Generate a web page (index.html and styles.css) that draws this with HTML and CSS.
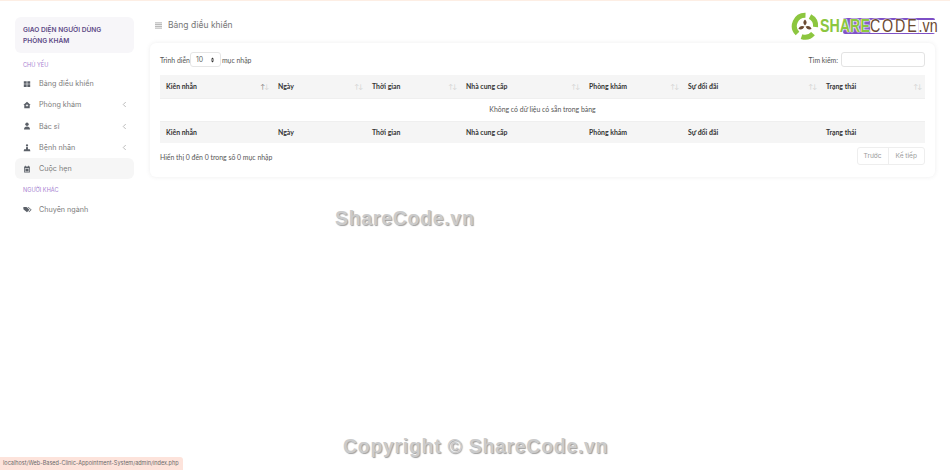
FILE: index.html
```html
<!DOCTYPE html>
<html lang="vi">
<head>
<meta charset="utf-8">
<title>Bảng điều khiển</title>
<link rel="stylesheet" href="styles.css">
</head>
<body>
<div class="app">
  <aside class="sidebar">
    <div class="brand">GIAO DIỆN NGƯỜI DÙNG PHÒNG KHÁM</div>
    <div class="section">CHỦ YẾU</div>
    <nav class="menu">
      <a class="item"><svg class="ico" viewBox="0 0 10 10"><path d="M1 1.500h3.600v3.200H1zM5.400 1.500H9v3.200H5.400zM1 5.400h3.600v3.200H1zM5.400 5.400H9v3.200H5.400z"/></svg><span class="label">Bảng điều khiển</span></a>
      <a class="item"><svg class="ico" viewBox="0 0 10 10"><path d="M5 .8 9.600 5H8.400v4H1.600V5H.4z"/><path class="cut" d="M4.500 4h1v1h1v1h-1v1h-1V6h-1V5h1z"/></svg><span class="label">Phòng khám</span><svg class="chev" viewBox="0 0 6 8"><path d="M4.500 1 1.500 4l3 3"/></svg></a>
      <a class="item"><svg class="ico" viewBox="0 0 10 10"><circle cx="5" cy="2.800" r="2.100"/><path d="M1.200 9.400c0-2.600 1.500-3.800 3.800-3.800s3.800 1.200 3.800 3.800z"/></svg><span class="label">Bác sĩ</span><svg class="chev" viewBox="0 0 6 8"><path d="M4.500 1 1.500 4l3 3"/></svg></a>
      <a class="item"><svg class="ico" viewBox="0 0 10 10"><circle cx="5" cy="1.800" r="1.400"/><path d="M4 3.600h2l.4 3H8.600l.6 2.600H.8l.6-2.600h2.200z"/></svg><span class="label">Bệnh nhân</span><svg class="chev" viewBox="0 0 6 8"><path d="M4.500 1 1.500 4l3 3"/></svg></a>
      <a class="item active"><svg class="ico" viewBox="0 0 10 10"><path d="M1.400 2h1.200V.8h1V2h2.800V.8h1V2h1.200v7.400H1.400zM2.400 4v4.400h5.200V4z"/><path d="M3 4.800h4V8H3z"/></svg><span class="label">Cuộc hẹn</span></a>
    </nav>
    <div class="section section-other">NGƯỜI KHÁC</div>
    <nav class="menu">
      <a class="item"><svg class="ico ico-wide" viewBox="0 0 12 10"><path d="M.5 1.500h4.200l4 3.800-3.400 3.400-4.800-4z"/><path d="M6 1.500h1.200l4.300 3.800-3.400 3.400-.7-.6 2.800-2.800z"/></svg><span class="label">Chuyên ngành</span></a>
    </nav>
  </aside>

  <main class="main">
    <header class="topbar">
      <svg class="burger" viewBox="0 0 8 8"><path d="M0 1h8M0 3h8M0 5h8M0 7h8"/></svg>
      <h1 class="title">Bảng điều khiển</h1>
    </header>

    <section class="card">
      <div class="controls">
        <div class="length">Trình diễn<span class="select">10<svg class="updown" viewBox="0 0 6 8"><path d="M3 .8 5.200 3.400H.8zM3 7.200.8 4.600h4.400z"/></svg></span>mục nhập</div>
        <div class="search">Tìm kiếm:<span class="input"></span></div>
      </div>

      <table class="grid">
        <colgroup>
          <col class="c1"><col class="c2"><col class="c3"><col class="c4"><col class="c5"><col class="c6"><col class="c7">
        </colgroup>
        <thead>
          <tr>
            <th><div class="th-in">Kiên nhẫn<span class="sort first"><i>↑</i><i>↓</i></span></div></th>
            <th><div class="th-in">Ngày<span class="sort"><i>↑</i><i>↓</i></span></div></th>
            <th><div class="th-in">Thời gian<span class="sort"><i>↑</i><i>↓</i></span></div></th>
            <th><div class="th-in">Nhà cung cấp<span class="sort"><i>↑</i><i>↓</i></span></div></th>
            <th><div class="th-in">Phòng khám<span class="sort"><i>↑</i><i>↓</i></span></div></th>
            <th><div class="th-in">Sự đổi đãi<span class="sort"><i>↑</i><i>↓</i></span></div></th>
            <th><div class="th-in">Trạng thái<span class="sort"><i>↑</i><i>↓</i></span></div></th>
          </tr>
        </thead>
        <tbody>
          <tr><td class="empty" colspan="7">Không có dữ liệu có sẵn trong bảng</td></tr>
        </tbody>
        <tfoot>
          <tr><th>Kiên nhẫn</th><th>Ngày</th><th>Thời gian</th><th>Nhà cung cấp</th><th>Phòng khám</th><th>Sự đổi đãi</th><th>Trạng thái</th></tr>
        </tfoot>
      </table>

      <div class="bottom">
        <div class="info">Hiển thị 0 đến 0 trong số 0 mục nhập</div>
        <div class="pager"><span class="page">Trước</span><span class="page">Kế tiếp</span></div>
      </div>
    </section>
  </main>
</div>

<div class="logo">
  <svg class="logo-mark" viewBox="0 0 28 28">
    <path class="ring" d="M14.500 3.200a10.800 10.800 0 0 0-8 18.400"/>
    <path class="ring" d="M10.500 24.600a10.800 10.800 0 0 0 11.500-3"/>
    <path class="ring" d="M19 4.500a10.800 10.800 0 0 1 5.600 10.500"/>
    <path class="seed" d="M14 7.500c2.200 2 2.200 4.200 0 6-2.200-1.800-2.200-4 0-6zM14.600 14.500c2.600-1.200 5-.4 6 2.500-2.800 1-5 .2-6-2.500zM13.400 14.500c-1 2.700-3.200 3.500-6 2.500 1-2.900 3.400-3.700 6-2.500z"/>
  </svg>
  <div class="logo-text"><div class="logo-inner"><b>SHARE</b><span class="code">CODE</span><span class="vn">.vn</span></div></div>
</div>

<div class="mark mark-mid">ShareCode.vn</div>
<div class="mark mark-foot">Copyright © ShareCode.vn</div>
<div class="status">localhost/Web-Based-Clinic-Appointment-System/admin/index.php</div>
</body>
</html>
```

FILE: styles.css
```css
* { box-sizing: border-box; }
html, body { margin: 0; height: 100%; }
body {
  width: 950px;
  height: 470px;
  overflow: hidden;
  position: relative;
  background: #fff;
  border-top: 1px solid #fdeee4;
  font-family: "Lato", "Liberation Sans", sans-serif;
  color: #4a4a4a;
}
.app { display: flex; align-items: flex-start; }

/* Sidebar */
.sidebar {
  width: 150px;
  flex: none;
  padding: 16px 16px 0 15px;
  font-family: "Inter", "Noto Sans", sans-serif;
}
.brand {
  height: 36px;
  padding: 8px 8px 0;
  background: #f7f6f9;
  border-radius: 6px;
  font-size: 6.600px;
  line-height: 10.500px;
  font-weight: 600;
  color: #5d4a86;
}
.section {
  margin: 7px 0 0 8px;
  height: 10px;
  font-size: 5.600px;
  line-height: 10px;
  color: #a77fd1;
}
.section-other { margin-top: 6px; }
.menu { display: flex; flex-direction: column; margin-top: 3px; }
.section-other + .menu { margin-top: 3px; }
.item {
  height: 21.300px;
  display: flex;
  align-items: center;
  padding: 0 7px 0 8px;
  font-size: 7.200px;
  color: #7c7c7c;
  border-radius: 6px;
}
.item.active { background: #f6f6f6; }
.ico { width: 8px; height: 8px; flex: none; fill: #5b6068; }
.ico-wide { width: 9px; height: 9px; }
.cut { fill: #fff; }
.label { margin-left: 8px; flex: 1; white-space: nowrap; }
.ico-wide + .label { margin-left: 7px; }
.chev { width: 5px; height: 7px; flex: none; fill: none; stroke: #a5a5a5; stroke-width: .9; }

/* Main */
.main { flex: 1; min-width: 0; padding-right: 15px; }
.topbar {
  height: 42px;
  padding: 6px 0 0 5px;
  display: flex;
  align-items: center;
}
.burger { width: 7px; height: 7px; flex: none; fill: none; stroke: #8e8e8e; stroke-width: .8; }
.title {
  margin: 0 0 0 6px;
  font-family: "Inter", "Noto Sans", sans-serif;
  font-size: 8.500px;
  font-weight: 400;
  color: #777;
}
.card {
  height: 134px;
  padding: 9px 10px 0;
  background: #fff;
  border-radius: 6px;
  box-shadow: 0 0 4px rgba(120, 120, 130, .14);
}
.controls {
  height: 23px;
  display: flex;
  justify-content: space-between;
  align-items: flex-start;
  font-size: 6.900px;
  color: #555;
}
.length { display: flex; align-items: center; height: 15px; white-space: nowrap; }
.select {
  width: 31px;
  height: 15px;
  margin: 0 1px 0 0;
  padding: 0 5px;
  border: 1px solid #e6e6e6;
  border-radius: 3px;
  display: flex;
  align-items: center;
  justify-content: space-between;
  font-family: "Inter", sans-serif;
  color: #666;
}
.updown { width: 5px; height: 6px; fill: #333; }
.search { display: flex; align-items: center; gap: 3px; height: 15px; white-space: nowrap; }
.input { width: 84px; height: 15px; border: 1px solid #e3e3e3; border-radius: 3px; }

.grid { width: 765px; table-layout: fixed; border-collapse: collapse; font-size: 6.900px; }
.c1 { width: 112px; }
.c2, .c3 { width: 94px; }
.c4 { width: 123px; }
.c5 { width: 99px; }
.c6 { width: 138px; }
.c7 { width: 105px; }
.grid th {
  height: 23px;
  padding: 0 6px;
  background: #f5f5f5;
  text-align: left;
  font-weight: 700;
  color: #333;
  white-space: nowrap;
  overflow: hidden;
}
.grid thead th { border-bottom: 1px solid #efefef; }
.grid tfoot th { height: 22px; border-top: 1px solid #efefef; }
.th-in { display: flex; justify-content: space-between; align-items: center; }
.sort { display: flex; font-size: 6.500px; font-weight: 400; color: #d0d0d0; margin-right: -3px; }
.sort i { font-style: normal; margin-left: -1px; }
.sort.first i:first-child { color: #777; }
.empty {
  height: 23px;
  padding: 0 0 1px;
  text-align: center;
  color: #555;
}
.bottom {
  display: flex;
  justify-content: space-between;
  align-items: flex-start;
  padding-top: 4px;
  font-size: 6.900px;
}
.info { margin-top: 6px; color: #555; }
.pager { display: flex; border: 1px solid #eee; border-radius: 3px; height: 18px; }
.page {
  display: flex;
  align-items: center;
  padding: 0 7px 0 6px;
  color: #9a9a9a;
  font-family: "Inter", sans-serif;
  font-size: 6.600px;
}
.page + .page { border-left: 1px solid #eee; }

/* Logo and overlays */
.logo { position: absolute; left: 791px; top: 11px; display: flex; align-items: center; }
.logo-mark { width: 28px; height: 28px; flex: none; }
.ring { fill: none; stroke: #8cc63f; stroke-width: 5; }
.seed { fill: #6b4a32; }
.logo-text { position: relative; margin-left: 1px; width: 118px; height: 16px; }
.logo-text::before {
  content: "";
  position: absolute;
  left: 23px;
  top: 0;
  width: 92px;
  height: 16px;
  border-radius: 2px;
  background: #7d4fc6;
}
.logo-inner {
  position: absolute;
  left: 0;
  top: -3px;
  display: flex;
  font-family: "Liberation Sans", sans-serif;
  font-size: 19px;
  line-height: 22px;
  color: #6b4a32;
  white-space: nowrap;
  transform: scaleX(.75);
  transform-origin: left center;
  text-shadow: 0 0 1px #fff, 0 0 1px #fff, 0 0 2px #fff, 0 0 2px #fff;
}
.logo-inner b { color: #8cc63f; }
.code, .vn {
  position: relative;
  background: linear-gradient(#fff, #fff) 0 5px / 100% 13px no-repeat;
  font-weight: 400;
}
.code { letter-spacing: 2.500px; }

.mark {
  position: absolute;
  font-family: "Liberation Sans", sans-serif;
  font-weight: 700;
  font-size: 19.500px;
  letter-spacing: .7px;
  color: #cbcbcb;
  text-shadow: 1px 1px 1px #a0a0a0;
  white-space: nowrap;
}
.mark-mid { left: 335px; top: 206px; }
.mark-foot { left: 343px; top: 434px; }
.status {
  position: absolute;
  left: 0;
  bottom: 0;
  height: 13px;
  width: 183px;
  padding-left: 3px;
  background: #fde3db;
  border-top-right-radius: 3px;
  font-family: "Inter", sans-serif;
  font-size: 5.500px;
  line-height: 13px;
  color: #6a6a6a;
  white-space: nowrap;
  overflow: hidden;
}
```
